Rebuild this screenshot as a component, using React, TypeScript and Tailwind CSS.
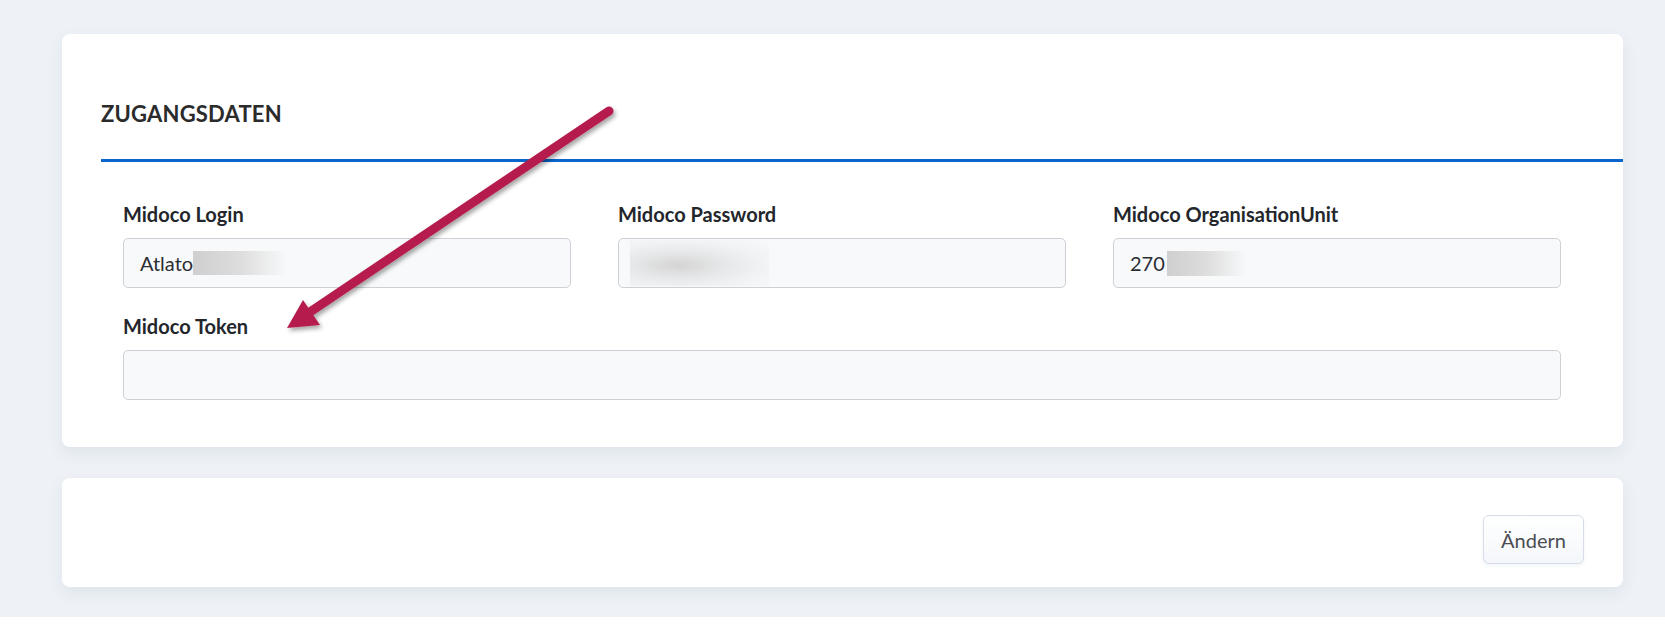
import React from "react";

const font = { fontFamily: '"Lato", "Open Sans", "Liberation Sans", sans-serif' };

function Label({ children }: { children: React.ReactNode }) {
  return (
    <div className="text-[20px] leading-[24px] font-bold text-[#23262b] mb-[12px]">{children}</div>
  );
}

function Field({ children }: { children?: React.ReactNode }) {
  return (
    <div className="h-[50px] rounded-[5px] border border-[#cdd1d6] bg-[#f8f9fa] flex items-center px-[16px] text-[20px] text-[#2b2e33] overflow-hidden">
      {children}
    </div>
  );
}

export default function App() {
  return (
    <div className="relative w-[1665px] h-[627px] bg-white" style={font}>
      <div className="bg-[#eef2f7] pt-[34px] pb-[30px] pl-[62px] pr-[42px] flex flex-col gap-[31px]">
        {/* Card 1 */}
        <div className="bg-white rounded-[8px] shadow-[0_6px_16px_rgba(40,60,90,0.08)] pt-[65px] pb-[47px]">
          <div className="ml-[39px] border-b-[3px] border-[#0a66cc] pb-[30px]">
            <h2 className="text-[22px] leading-[30px] font-bold text-[#2b2b2b] tracking-[0.2px]">ZUGANGSDATEN</h2>
          </div>
          <div className="pl-[61px] pr-[62px] pt-[40px]">
            <div className="grid grid-cols-3 gap-x-[47px]">
              <div>
                <Label>Midoco Login</Label>
                <Field>
                  <span>Atlato</span>
                  <span className="inline-block w-[94px] h-[24px] bg-linear-to-r from-[#cfcfcf] via-[#dddddd] to-[#f8f9fa]" />
                </Field>
              </div>
              <div>
                <Label>Midoco Password</Label>
                <div className="h-[50px] rounded-[5px] border border-[#cdd1d6] bg-[#f8f9fa] flex items-center pl-[11px]">
                  <div className="w-[139px] h-[46px] bg-[radial-gradient(ellipse_at_35%_55%,#d4d4d4_0%,#e6e7e8_35%,#f1f2f4_65%,#f8f9fa_100%)]" />
                </div>
              </div>
              <div>
                <Label>Midoco OrganisationUnit</Label>
                <Field>
                  <span>270</span>
                  <span className="inline-block w-[79px] h-[25px] ml-[2px] bg-linear-to-r from-[#cfcfcf] via-[#dddddd] to-[#f8f9fa]" />
                </Field>
              </div>
            </div>
            <div className="mt-[26px]">
              <Label>Midoco Token</Label>
              <Field />
            </div>
          </div>
        </div>

        {/* Card 2 */}
        <div className="bg-white rounded-[8px] shadow-[0_6px_16px_rgba(40,60,90,0.08)] pt-[37px] pb-[23px] pr-[39px] flex justify-end">
          <button className="w-[101px] h-[49px] rounded-[6px] border border-[#d6dde8] bg-linear-to-b from-white to-[#f4f7fa] text-[20px] text-[#4a4d52] shadow-[0_2px_4px_rgba(40,60,90,0.06)]">
            Ändern
          </button>
        </div>
      </div>

      {/* Annotation arrow */}
      <svg className="absolute left-0 top-0 pointer-events-none" width="1665" height="627" viewBox="0 0 1665 627">
        <defs>
          <filter id="sh" x="-20%" y="-20%" width="140%" height="140%">
            <feDropShadow dx="2" dy="3" stdDeviation="2" floodColor="#000" floodOpacity="0.35" />
          </filter>
        </defs>
        <g filter="url(#sh)">
          <line x1="609" y1="111" x2="307" y2="314" stroke="#b51f4e" strokeWidth="9" strokeLinecap="round" />
          <polygon points="287,328 303,300 320,325" fill="#b51f4e" />
        </g>
      </svg>
    </div>
  );
}
